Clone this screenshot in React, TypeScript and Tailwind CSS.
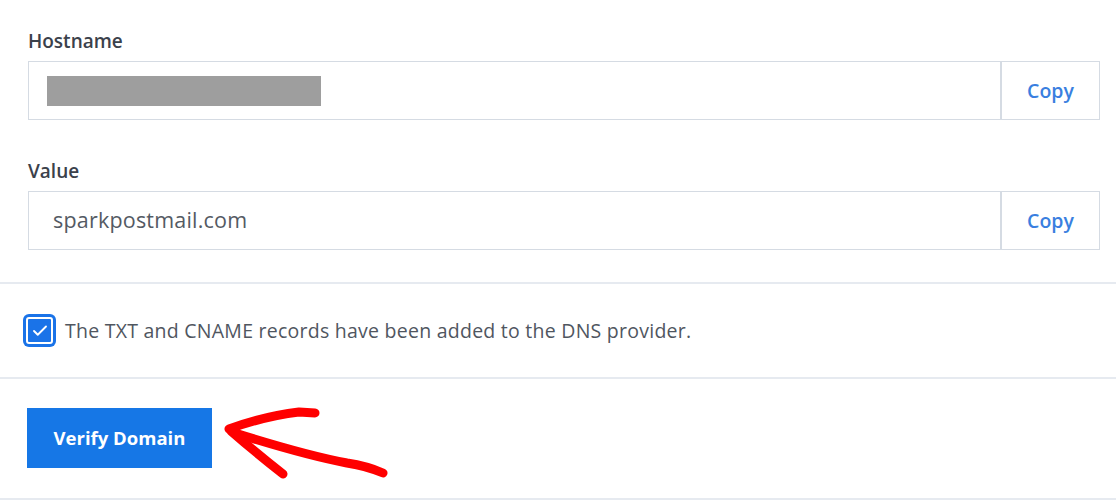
import { Check } from 'lucide-react'

function CopyField({ children }: { children: React.ReactNode }) {
  return (
    <div className="flex h-[59px] border border-[#d5dbe3] bg-white">
      <div className="flex flex-1 items-center">{children}</div>
      <button className="w-[99px] border-l-2 border-[#d5dbe3] text-[19.5px] font-semibold text-[#3a7fe0]">
        Copy
      </button>
    </div>
  )
}

export default function App() {
  return (
    <div
      className="relative h-[502px] w-[1116px] overflow-hidden bg-white"
      style={{ fontFamily: '"Open Sans", "Liberation Sans", sans-serif' }}
    >
      {/* Record fields */}
      <div className="pl-[28px] pr-[16px] pt-[29px] pb-[32px]">
        <label className="block text-[19px] font-semibold leading-[24px] text-[#3b414b]">Hostname</label>
        <div className="mt-[8px]">
          <CopyField>
            <div className="ml-[18px] h-[30px] w-[274px] bg-[#9e9e9e]" />
          </CopyField>
        </div>

        <label className="mt-[39px] block text-[19px] font-semibold leading-[24px] text-[#3b414b]">Value</label>
        <div className="mt-[8px]">
          <CopyField>
            <span className="pl-[24px] text-[21.5px] tracking-[0.2px] text-[#545a63]">sparkpostmail.com</span>
          </CopyField>
        </div>
      </div>

      {/* Confirmation */}
      <div className="flex h-[97px] items-center border-t-2 border-b-2 border-[#e6eaf0] pl-[23px]">
        <div className="flex h-[33px] w-[33px] items-center justify-center rounded-[6px] bg-[#1a73e8]">
          <div className="flex h-[27px] w-[27px] items-center justify-center rounded-[3px] border-2 border-white bg-[#1a73e8]">
            <Check className="h-[18px] w-[18px] text-white" strokeWidth={2.5} />
          </div>
        </div>
        <span className="ml-[9px] text-[19.5px] tracking-[0.25px] text-[#50565f]">
          The TXT and CNAME records have been added to the DNS provider.
        </span>
      </div>

      {/* Action */}
      <div className="border-b-2 border-[#e6eaf0] pl-[27px] pt-[29px] pb-[30px]">
        <button className="h-[60px] w-[185px] bg-[#1677e6] text-[18.5px] font-bold text-white">
          Verify Domain
        </button>
      </div>

      {/* Annotation arrow */}
      <svg
        className="absolute left-[215px] top-[400px]"
        width="185"
        height="85"
        viewBox="0 0 185 85"
        fill="none"
        stroke="#ff0000"
        strokeWidth="9"
        strokeLinecap="round"
        strokeLinejoin="round"
      >
        <path d="M14 29 Q50 16 84 12 L100 13" />
        <path d="M16 31 Q40 52 68 74" />
        <path d="M20 33 Q90 55 132 63 Q152 66 168 73" />
      </svg>
    </div>
  )
}
